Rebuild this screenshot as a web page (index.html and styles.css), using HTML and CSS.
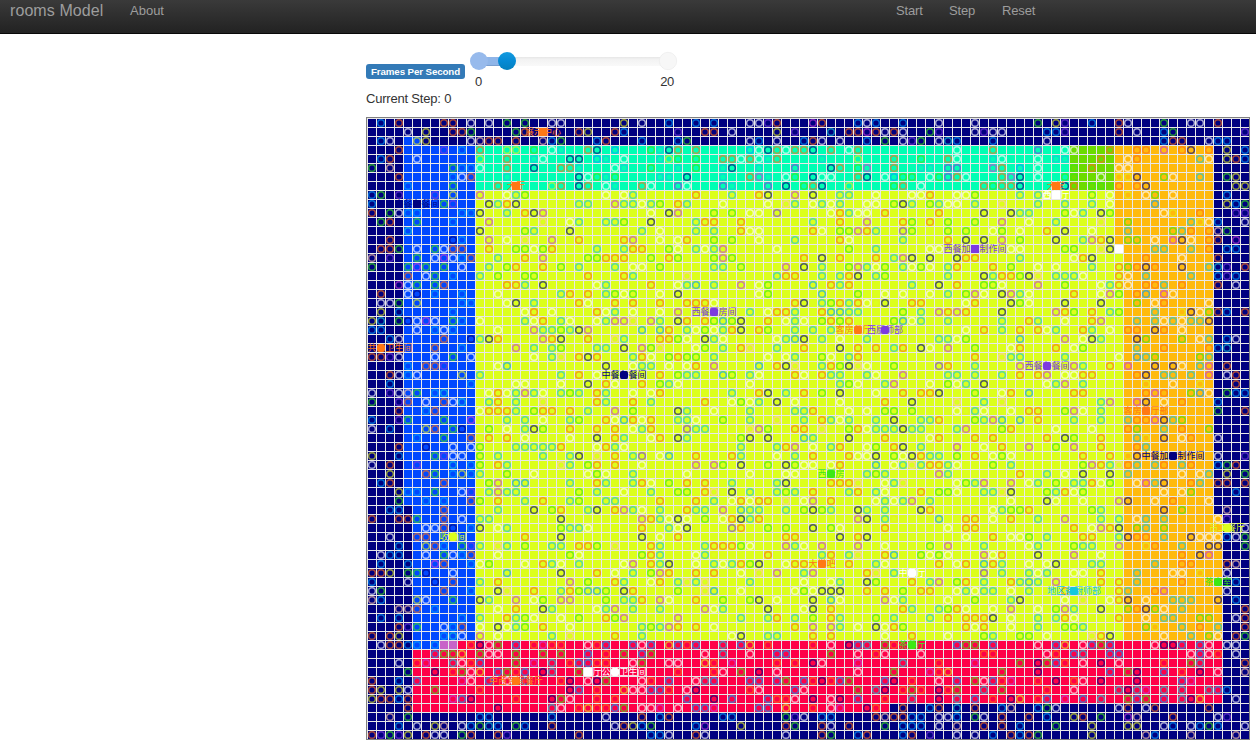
FILE: index.html
```html
<!DOCTYPE html>
<html lang="en">
<head>
<meta charset="utf-8">
<title>rooms Model</title>
<link rel="stylesheet" href="styles.css">
</head>
<body>
<nav class="navbar">
  <a class="brand">rooms Model</a>
  <a class="about">About</a>
  <div class="controls"><a>Start</a><a>Step</a><a>Reset</a></div>
</nav>
<main class="content">
  <div class="fps">
    <span class="label">Frames Per Second</span>
    <div class="slider">
      <svg class="track" width="210" height="22" viewBox="0 0 210 22">
        <defs>
          <linearGradient id="tr" x1="0" y1="0" x2="0" y2="1"><stop offset="0" stop-color="#e6e6e6"/><stop offset=".25" stop-color="#f2f2f2"/><stop offset="1" stop-color="#f9f9f9"/></linearGradient>
          <linearGradient id="hd" x1="0" y1="0" x2="0" y2="1"><stop offset="0" stop-color="#149bdf"/><stop offset=".5" stop-color="#058ad5"/><stop offset="1" stop-color="#0480be"/></linearGradient>
        </defs>
        <rect x="10" y="7" width="190" height="9" rx="3" fill="url(#tr)"/>
        <rect x="10" y="7" width="29" height="9" fill="#8fb5e8"/>
        <rect x="10" y="15" width="29" height="1" fill="#7b9fd0"/>
        <circle cx="10" cy="11" r="9" fill="#97baec"/>
        <circle cx="199" cy="11" r="8.7" fill="#f7f7f7" stroke="#e9e9e9" stroke-width=".6"/>
        <circle cx="38" cy="11" r="9" fill="url(#hd)"/>
      </svg>
      <div class="ticks"><span>0</span><span>20</span></div>
    </div>
  </div>
  <p class="step">Current Step: <span>0</span></p>
  <svg class="grid" id="grid" width="884" height="623" viewBox="0 0 884 623"></svg>
</main>
<script src="grid.js"></script>
</body>
</html>
```
FILE: styles.css
```css
body {
  margin: 0;
  background: #fff;
  color: #333;
  font: 13px "Liberation Sans", Arial, sans-serif;
  overflow: hidden;
}
.navbar {
  height: 33px;
  border-bottom: 1px solid #080808;
  background: linear-gradient(#3a3a3a, #222);
  color: #9d9d9d;
  display: flex;
  align-items: flex-start;
  padding: 0 201px 0 10px;
}
.brand { font-size: 16px; line-height: 18px; padding-top: 2px; width: 120px; letter-spacing: .08px; }
.about { line-height: 15px; padding-top: 3px; }
.controls { display: flex; margin-left: auto; line-height: 15px; padding-top: 3px; }
.controls a { width: 53px; letter-spacing: -.15px; }
.content { margin-left: 366px; padding-top: 16px; }
.fps { display: flex; height: 41px; }
.label {
  margin-top: 14px;
  width: 99px;
  height: 15px;
  border-radius: 3px;
  background: #337ab7;
  color: #fff;
  font: bold 9.75px/15px "Liberation Sans", Arial, sans-serif;
  letter-spacing: -.12px;
  text-align: center;
  white-space: nowrap;
}
.slider { margin-left: 4px; width: 210px; }
.track { display: block; }
.ticks { display: flex; justify-content: space-between; padding: 2px 5px 0 6px; line-height: 15px; letter-spacing: -.3px; }
.step { margin: 0; line-height: 15px; letter-spacing: -.2px; }
.grid { display: block; margin-top: 11px; }
.tag { font-family: "Noto Sans CJK SC", sans-serif; font-size: 9px; text-anchor: middle; }
```
FILE: grid.js
```js
// 98 x 69 room grid, 9px cells
const S = 9, X0 = 1, Y0 = 1;
const out = [];
const rect = (c, r, w, h, f) =>
  out.push(`<rect x="${X0 + c * S}" y="${Y0 + r * S}" width="${w * S}" height="${h * S}" fill="${f}"/>`);

const navy = '#000080', blue = '#0048ff', lime = '#dcff1c', teal = '#00ffb4', amber = '#ffba0c', red = '#ff0048';
rect(0, 0, 98, 69, navy);
rect(4, 2, 2, 1, blue);
rect(4, 3, 8, 40, blue);
rect(5, 43, 7, 16, blue);
rect(12, 3, 66, 5, teal);
rect(78, 3, 5, 5, '#6cdb00');
rect(12, 8, 72, 50, lime);
rect(83, 3, 11, 11, amber);
rect(84, 14, 10, 44, amber);
rect(94, 44, 1, 14, amber);
rect(5, 59, 90, 6, red);
rect(10, 58, 85, 1, red);
rect(5, 65, 53, 1, red);

const ink = {
  o: '#ff6e14', g: '#3ce814', c: '#14c8dc', w: '#fff', k: '#000080',
  p: '#c83cdc', b: '#00a0ff', y: '#e4f01e', v: '#7c3ae0', e: '#ffc8a8'
};
const agents = `1b3o8o9o11w13w15g17g20w21w28y30w33b36b38b42w43w44v45o49p50o54b55w56b59b63w67w74g76y77v80b83o84w88g91w92w94o
4w6y9o10o11g16g17o23o24y27o28b34v37o38o40w45y47v51c53o54o55p56o57w58o59w62g63v67w68v69w70w75b76b77v83o85w88b89g97v
1b2w5y6y11w12e13o14o16o19e20b21g25b26o30b34b35g42w43b45w48b49o50w52w55b57g59w60v61g63w64c65b69b75w88b89o90o93w94b95b
3o8v10b12o15y16y18g20w21c24o25k27b31g32c33k34o36o42b43w44k45o46w47o48o49k51o53w54o65w69o74v77w78w82o85o86o88p90o91k93o95y97b
1b2o5w12y15o18c19w22k23k25b26c28w32c33y34g36g39o40o41w42o43w44c45o50c54y58o61g64o65w69c70w74w76c77c81o84w85o92c93w95y96o97b
0g2e9g10b11b12w15o18k21o22o23c27w28c31g34c36g39c40k43c47v51k52o54g55p58o61c62c64v65v69p70o72b74w78g80o83w84w
3o9b10w11o15c23k24w25g26c27g32c33c35k39c42o43p44c46w47g49k50w51w54o55k57w58b59g60g62w63g64v65o66w70o71p72k74w77g78g81w83y84y85k88g89w92c95g96y
4b9g14o20y21o23k24o26w27c30o31w34v35w39v40c44v46k48g49o50k53y58g59o61w68o69g70o71o72k77k78o80g81g83o85o86k96y97y
0b1g3v7v9y12p15w16c17g26w28w29c36o37y40c43o44k45y47p49k52c53c56w60w61w62o65w66w67g72c74c75w80g82w84y86w87g89w95b
0b8g9v13k14c15o16k23c24c27p28c29c30w31c32g34o35c39w44w46e47c49w50c51w52c55w56w58g59k60c62g63c64w65w67c70e74c77c80c82w87b95y96b97g
0o2g3w4b5b10b11b12k15c17o18k19p31w33k34p38g40g42w43w45v51w52o53c54w55w57o63o68k71k72c73c77g78w79c81k82g88w89y92o96v97v
1g2o5g9b13p19e22w23c26c27c28g31k36c37o38o41o49c52o55p59o60g62o64g67g70p73w76c81e84g91c92y93w94b97w
4c12k17g18c22k30c32w36c38c41o42w43w49o50w52g53g54p55o56c59v60g64g66g69w70g72w75o77k80w84c89g90c91o93o94e95g
2o9k10b13p15w17e20p23o28o29p32w34w35o38g40g43w47c52o53w59c64o66k68k70p72g76k79c80p81o82k84g85g87w89p90k91w93o94o96p
1o2o3g5w7g8w9o10o13o16g17g18w19g20o25c28c29o30o33g34w36c37w38c39p45w53g56c62w63w71w72w77g78g81e82k87c88c91c93o95b96b
0e2v5g7w8p9w10b11o14c17o19p24g25g26o27o28o31g33o34g38g39p40g41y48o50k51y52o56o58c59p60k62k65k66o67o72c78w79o80k86o90w94o
0g4g5p6g8g10w13c15g16o19o21g23c27c29w30w32g38c39c41g46p48k50c53g54p55c56w57g59c60w61g62w64c65o69o71g74w76w80c83o84g85o86k87o90k93c94c95v97o
4o6w7g9b12c14g17g18g24o28o29c35e39y45c46o47o50c52c53o54k56c57g64c68k69c70o71o72g73k74e76c77c78c79w83o84w86c91c94b95v96b
3p4w5g7g8o15o16o17c19k25w26c31o34w35c36b38c41p43w44g49b51o52c53o60c63k65o68g69g70w74p77g81w82c83o84w86o87o88c90o94o96w
1o4w5k7b10b14w21c22o24o26c27g28w29g32w34k43w44g50b54g57w59w62w64c66g67p68w70k71p72c73w78o81w82p83g85o86b88p89w
1w2w3g5y10b11b15w16k18c23o24w27o29o32o35o36o37o38w47o48k50c51g52o53c54o55w56y57k60o61o66w67o71k72g73w77k81k85g87w88o93w
1y3b9b17w18o20w25o26w27c29w32w34p42c44w45o46o47c50o51b52b53c54c59g61c63p64o65p66o70k76p77o78g80o82c83g87c90y91k92w93g94o95b97o
0y1c3g4k5w6p7w9g10b12w17c18w19o21c22w25w26c27p28p29e31p32c34k35o37o38g39b40g41k44o46w47c48w50g51o52g53o58g59b60w61c64c70c73o74c77w80o81p85c87c88w89c90w91c92c93k
0b1b5w7b8w9b14w18p19c20c21g22c23k24p30b32b33o35c36w37g38w39c40o41k43o44g47c49c51c66w68o70c72o74o75w76c79o80c82w84o85o87k88o90w
2b3w8o11k12c13k14o19p20o21k24o27e28c32o33o34g35w37k38c39w45w46c47b48k50c52w55c63c64c65w66g72b77p79w80k81c85k86g90g92w93c95b96w
7o10b16p18c20c21g25c26c28k30p31g32e36w37g39c41o42e45c48o51y52k54o56o58c59o61k62w64p67g71w72o76o78w79g85c88o93o94b95c
0o1o2v3w7w9g11w18w20c21e23o24k25o27y29c30o31w33g34o35g36g38c44w46w47c50g51w53c54o67o70e71c72c77c83w85b86c87g92g93c
4b6o7o8v14w15b26k29w30c31c33w35w36o38p43b45o46k47e50c51o52g53k54e55w58g63v64o67c72p78p79c82o84p87k89k90w92c93p95o
2o3w4b5w10y12c21c23o25w32o34g35c36c39b40g42c43w47o48w50o51c52c55c56w59p64c65c67c70c72o74o75p77w78w79o80o85o86k88c89c91c93p95w96o
2b11b16w17w21w24k26o27w30o32g33c34w40y42w52c53g54w57c58p62w64g65w66c68k75w76c77p79c86y89w92y96o
0w2v3w4e5g7b8c13w14o15w16c17p18c19w21c22g23c25o26c29w31w32o40c43o44k46c48o50g52k56w59o61o62o63k67g70w71o73b78o79o86o87p88o91g92b93w95g96b97b
0g3v4o6w8o9w10c13c14o16c19e25o26c29o31c37o40w41g42w43c45k47w52w57o60k65e68c70e81c82p85p86k88w90o94b
3o6b7o12w13o14o15o16c18g19o20o22o24c27p29g34k35c38w42c45y46y47c48c49o53w55w57g58g60g65w66y67c68w71w73o74o77g78p79w81c94g97o
0b3v4g8g11p15c17c19w22c23g26o27w28b29o30w31o34c35c36w39g42c45e48c50o51c52w53c56c58k61c62c63o67g68c69p70b72b74o78c81c84c85o86o87p88k89c90g
0w2b6y7o9g10k13g15w17c18k19g22o25o27o29w30c31o35v36c37c42e43p44g47o48o50e53g54o55w56c57c58c59k60c61c65c66p70g71o76w80w84o85g88c90o93g
5b8g11o12y13o15o17w22w25k27o28c31w32o34k35c40y41g42k44k48b49c53k57o62w63o67o69o73y75o77k78g81o85c86y88k90w91o94w
3o6k9w11w12g16c17c18c19c20c21o25w26o27c28w41c45c46o47p49w51c52o55w56g58o59k61c65p68w70o73p76g78p81o85o86c
0y3b7g8v9w10w12g14c19c22c23k25e27o29c30v32w33b36o40o41c45w47c49o53o54w55w56k58g59w60k61o62c63c65g67o69w70g71w79o82o84y85k94w97v
0w2o5v9c11b12g14o15c21e22c24g25o27o30w36p38p39g41k44g46k47g48w49w51w52o56b58w59c60e61c62o63o64c65w69g71c79g80p81o82c83e84o85c87c88o90c91o94b95g96o
2y6o7g9b10y11b12c15g18w24w25g26w29c35w42w46w47w55c56g57c63p64c72o75c77w79k82k84c90w92w93c95y97g
1b2o8o13g14p16b17b22c25o26c29c30o31w33g35o37o40c45c46k51o52o53o54e57w58c59e65w66g67c68p71p73w74c76g78c79c80o81w82g85w86p87c88k91o92c94o95o97o
3y4b5b7g10w11v13c14p15c16c23g25c28w31c34g35g37o38e40k42c45c46g47c49o50y53c54o56c57w61o63g64g65w68c69c70e71k75g76c77o78w79g88w90w91g96b
3g6b8b11o12g14o17c19o22c23g26c27c32o36o38c40w41o42w43o44o46e48w49p51o56w57c58w59c60p62c71w75k76w79w83p84k87w89o93w
2b3b8o14c18k20g21o24c25k27o28p29c30w32c35o36c37c39p41b42c43c46c48g49k50g51c54k55c57c61k62o67y69w70c71g72g73o80g81c88k90g95e
0o3o4o5g8o10w12c13c21k30p31o32c33w34k35w37g39w40o41k42c43o54p55k57c58y63b66o67o69w71o74c77p81c83c85w86c88c94w95v
6w7w8o9k11b12k14w15c21g22c23c24w30o33c34w35k40v41o44g46g49k51g52w57o64w66o67o78o80w81p82o83k85g86c88g97w
2w5o6o17o21k30k32w34o46o47o52k54o55k57y66w69o71w72w73g75c79o80o83c84k85o86o88c91k92w93w94w95b96w97g
3b6y7o8b10g11v12c14e15c17g20c21c23o24o25g27e31o32c35y37c38o39o40o41g42w46p47c48w50p54p57w62g64p68c73w74c78g79c80c83p86y87o90c93k94k97g
1w2b3b6w8g9w10b11o14w22g23w30g31o32c36w37c38y44o50c51o53c54e57o58b61g62w63g64w68p69w70o74k78p81w90o92k93p
1b4b7p8o11b12w13g17w19o20c21w23c28w29p31o32c33k36w38c39w40c41o42g43k46w47o48o53o56c57w63o65w66o68b69o70c73w75w76k80c81c87c90o91o95o96e
0o1o2y4g5g6k9w15b21k25o27w29c31g32p33o36o38o41w43e45p48c49p55o56e58c68v70c73c74w75c78w79w81o85c89w90w92y95w
0b4w7k9o12c14o22p24g27o28c31w32o34c35e36c37e42c48w51w52c55k56g60o62c63p65g66o68c71o72c73b74c76p81o83o85c90o96b
0w1g8o11b14k15e18o21c22o23g24b25b26g28k29o33y34g36y37e38b41w47w48g49w50k51k52k55o57o59g61o62o65w66c67w68c69c71w73c77o83o84c87o88p95w
0e1b5y6w9g12k13c16p18w19g21p22p26g28c29c30o32p33w36o39g42g43k44y45w49k51b52w57p58w59c64w67g71c72k77w79e82w83o84k86w89c90c91c94k96b
3e4e5o7b14w16o19k20c25w26c27p29c32c37p38w39c44k48w49k51o52y59o60c63c64g65o66w69w71p74w76g77p78c81k84g85o86k87g88w90c97o
1b3b10b12c15o16c17g18w19y21w23g26o27g28p34p41c44c45o47c49g51o52c56g58c62c64o66o67o68o69k71w74c76c77o78w83o86w88c89c92g93g96w97o
3o4v5g8w9b10o12w14k15w16c17g19o22w30c31g32c33p34o36o38w47o49p51p52c54w56k57w58o59g66o67w68o71w74c77g78g79c86g87y90c92o94c97o
0o2o3y8b9c10w12p14w20c22e27o30c40w41k44c45c49o51o57w60o64w68g69c72g73g75w80e81o82k88w91c93g94w96o97g
1w2o3o4b5b7b9v11o12k13w14g16b18o19p20o21o24w25o26b29b30w31b33y34b35o36b39c41b42y44o49o51w53k54b55c57g58o65b66g67g69b74w76b77y79w80b81g82b87w88k89k90b92b93w95w96w
7b8g9g10y12g13w14w16g19g21g24b26o28g30b31g37w39c42w45b46b51g54w56o57w61w68o69o75w76o78b79c82b83b91w92b93w94o96w
3w5o6p9c10w11o12b16g18p20c22o23b24b25o26o29w30g33w34w37y38o40p45o47o49k50w54p59c63o67p72g74k75g76b77o79w81k83w88o91g92c97o
4g7k9o10g11w12y14b15g16o17b19k20c23g34o38o39w41g43k45w54w58g62p63o64y70g74k82b84g85k88b90o92k94w96k97e
0o3b5b10p11w13b15w17b21o22k24w25k26g30w31o33b36w37c38b42b43b45b46g48b49o50k51o52b53g57b58k60o63w65b67g68w69b70o71p74o76k78o79w81k85k90b91p
0o1y3y4w7g12o22k23b25o28y29w30w31b32b33o35w36k42o43w47b48w54g56c57k59o60g61o63k64o65g68c70g75o78w83c84k85c86p88c90c93c94b95b
0y1o2o3b4o9p10b11k16o20k21g22w25o27o35b38k40b44b45o46o47w49k51w52k54b57o60c63k65c67b69o71k72y74o75b77p79b81c84g85b86g88b90c91k92y96w
4o14k20c21w23o24y25o26o27b28g30w31w32p34w36b37b38p43b44b46y49o51w52p55k56o59o62b63o65c67o70b71e74b75g76w83w84o86w87o93o
2e4g12b13b20b26w30o32b33o39b40b46g47v48w50b51b56o57e58o59o60b61b63w64w65b67g68w70o73o75b78y79o81g84p85e89o94w95v
3b5w7y8e10w11b12g13c14b16g17b20o27w28o29y30b31g36b37p41y46o47g50o51w53o57g59b60b61b63w65e68o70o72b76g80y84y85y88w89b91w92b93g94b97w
0o1v2g3v4y6o7w8w10g11o14o15v20k23o31b32b33w36o37w46w49k50o51g54b55o59b60o62v65w67w69b71o72b73o74g80y86e87b91e96e`;

agents.split('\n').forEach((row, r) => {
  for (const [, c, k] of row.matchAll(/(\d+)([a-z])/g)) {
    out.push(`<circle cx="${X0 + c * S + 5}" cy="${Y0 + r * S + 5}" r="3.35" fill="none" stroke="${ink[k]}" stroke-opacity=".65" stroke-width="1.5"/>`);
  }
});

// cell borders
let d = '';
for (let i = 0; i < 98; i++) d += `M${X0 + i * S + .5} 1V622`;
for (let i = 0; i < 69; i++) d += `M1 ${Y0 + i * S + .5}H883`;
out.push(`<path d="${d}" stroke="#e8e8e8" fill="none"/>`);

// named rooms: column, row, colour, name, text offset
const O = '#ff7814', V = '#7c3ae0', W = '#fff', G = '#3ce814', Y = '#dcff1c';
[
  [19, 1, O, '展示中心'], [16, 7, O, '大厅'], [5, 9, navy, '中餐备餐间'], [76, 7, O, '大堂'],
  [76, 8, W, '西餐厅'], [67, 14, V, '西餐加工制作间'], [83, 14, W, ''], [38, 21, V, '西餐厨房间'],
  [54, 23, O, '客房餐厅', -4.5], [57, 23, V, '西厨师部'], [1, 25, O, '共　卫生间', 9], [75, 27, V, '西餐备餐间'],
  [28, 28, navy, '中餐备餐间'], [86, 32, O, '客房餐厅部'], [89, 37, navy, '中餐加工制作间'],
  [51, 39, G, '西厨房'], [95, 45, Y, '员工餐厅'], [9, 46, Y, '收银间'], [50, 49, O, '大堂吧'],
  [60, 50, W, '中餐厅'], [94, 51, G, '茶水室'], [78, 52, '#14c8dc', '地区备厨师部'],
  [60, 58, G, '茶餐厅'], [8, 58, '#c864c8', ''], [9, 58, '#c864c8', ''],
  [27, 61, W, '餐厅公共卫生间'], [24, 61, W, ''], [16, 62, O, '中西包间餐厅']
].forEach(([c, r, f, t, dx = 0]) => {
  const x = X0 + c * S, y = Y0 + r * S;
  if (t) out.push(`<text class="tag" x="${x + 5 + dx}" y="${y + 8.3}" fill="${f}">${t}</text>`);
  out.push(`<rect x="${x + 1}" y="${y + 1}" width="8" height="8" rx="${t && r > 20 ? 2 : 0}" fill="${f}"/>`);
});

out.push('<rect x=".5" y=".5" width="883" height="622" fill="none" stroke="#fff"/>');
out.push('<rect x=".5" y=".5" width="883" height="622" fill="none" stroke="#000" stroke-dasharray="1 1"/>');
document.getElementById('grid').innerHTML = out.join('');
```
